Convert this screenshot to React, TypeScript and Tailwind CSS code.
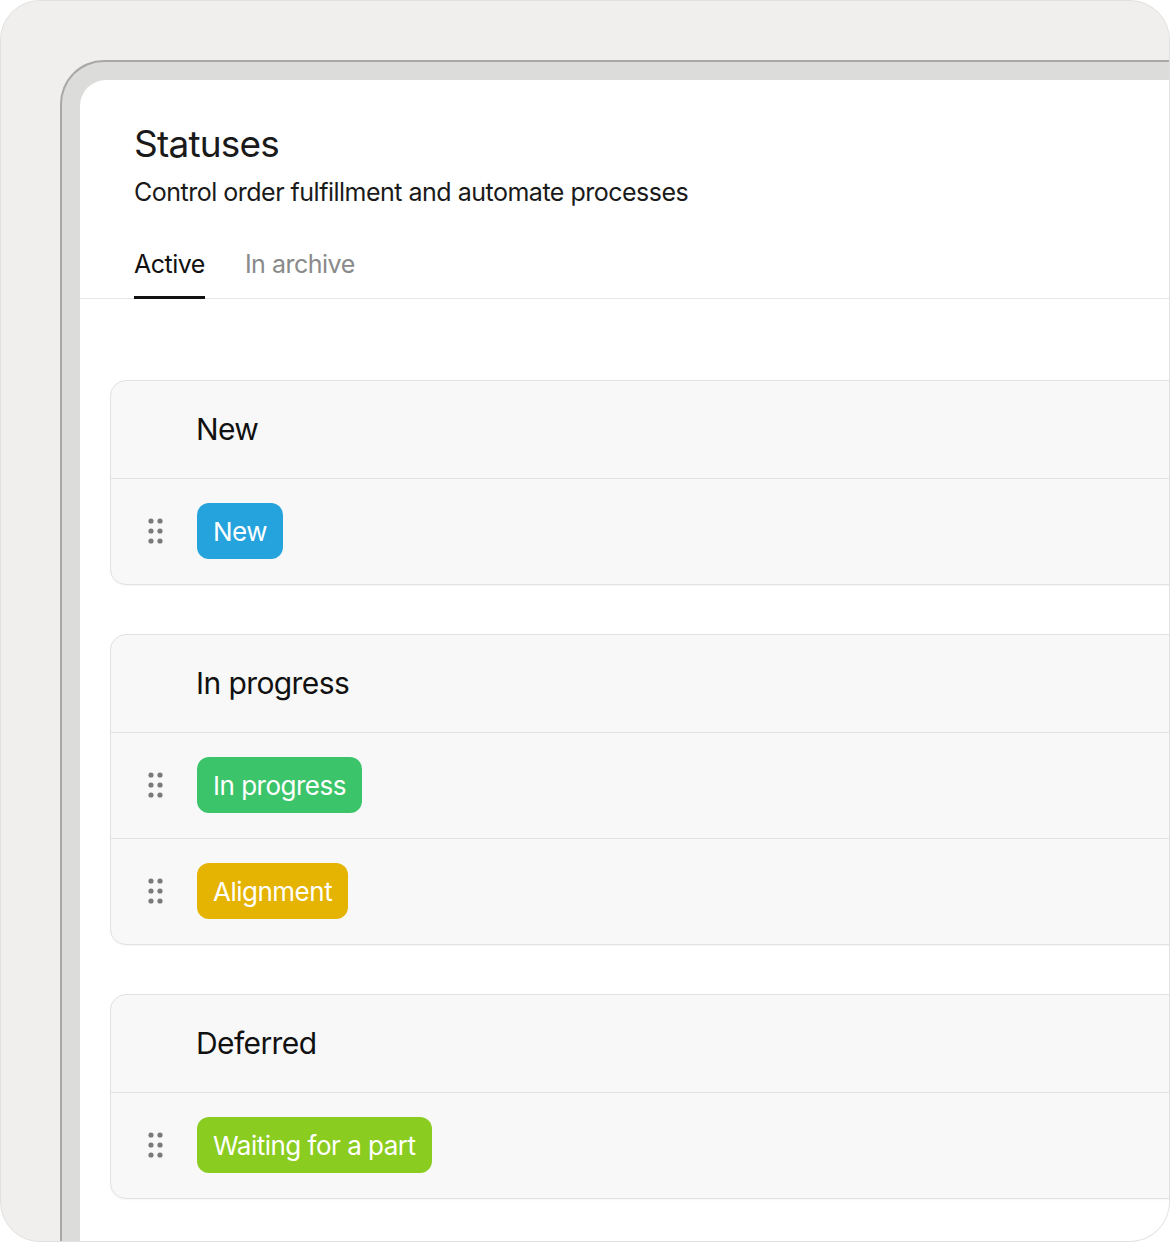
import React from "react";

const Dots = () => (
  <svg width="16" height="26" viewBox="0 0 16 26" fill="#7a7a7a">
    {[3, 13, 23].map((y) => (
      <g key={y}>
        <circle cx="3" cy={y} r="2.6" />
        <circle cx="12" cy={y} r="2.6" />
      </g>
    ))}
  </svg>
);

const Row = ({ label, color, last }: { label: string; color: string; last?: boolean }) => (
  <div className={`h-[106px] flex items-center border-t border-[#e3e3e3] ${last ? "" : ""}`}>
    <div className="w-[86px] flex justify-center pl-[4px]">
      <Dots />
    </div>
    <span className={`h-[56px] px-[16px] rounded-[12px] flex items-center text-white text-[26px] tracking-[-0.5px] ${color}`}>{label}</span>
  </div>
);

const Card = ({ title, rows }: { title: string; rows: { label: string; color: string }[] }) => (
  <div className="bg-[#f8f8f8] border border-[#e3e3e3] rounded-[16px] -mr-[30px] shadow-[0_1px_2px_rgba(0,0,0,0.04)]">
    <div className="h-[97px] flex items-center pl-[85px] text-[30px] text-[#111] tracking-[-0.6px]">{title}</div>
    {rows.map((r) => (
      <Row key={r.label} {...r} />
    ))}
  </div>
);

export default function App() {
  return (
    <div className="w-[1170px] h-[1242px] bg-[#f0efee] border border-[#e2e1e0] rounded-[40px] overflow-hidden pt-[59px] pl-[59px]" style={{ fontFamily: "Inter, 'Liberation Sans', sans-serif" }}>
      <div className="h-full bg-[#dcdcdb] border-t-2 border-l-2 border-[#a8a8a8] rounded-tl-[44px] pt-[18px] pl-[18px]">
        <div className="h-full bg-white rounded-tl-[26px]">
          <div className="pl-[54px] pt-[40px]">
            <h1 className="text-[37px] leading-[48px] text-[#1a1a1a] tracking-[-0.8px]">Statuses</h1>
            <p className="text-[25px] leading-[32px] mt-[8px] text-[#1a1a1a] tracking-[-0.5px]">Control order fulfillment and automate processes</p>
            <div className="flex gap-[40px] mt-[38px] text-[25px] tracking-[-0.5px]">
              <div className="pb-[12px] border-b-[3px] border-[#111] text-[#111]">Active</div>
              <div className="text-[#8a8a8a]">In archive</div>
            </div>
          </div>
          <div className="border-t border-[#e6e6e6] -mt-[1px]" />
          <div className="pl-[30px] pt-[81px] flex flex-col gap-[49px]">
            <Card title="New" rows={[{ label: "New", color: "bg-[#25a3dd]" }]} />
            <Card
              title="In progress"
              rows={[
                { label: "In progress", color: "bg-[#3cc46b]" },
                { label: "Alignment", color: "bg-[#e5b302]" },
              ]}
            />
            <Card title="Deferred" rows={[{ label: "Waiting for a part", color: "bg-[#8bcc20]" }]} />
          </div>
        </div>
      </div>
    </div>
  );
}
